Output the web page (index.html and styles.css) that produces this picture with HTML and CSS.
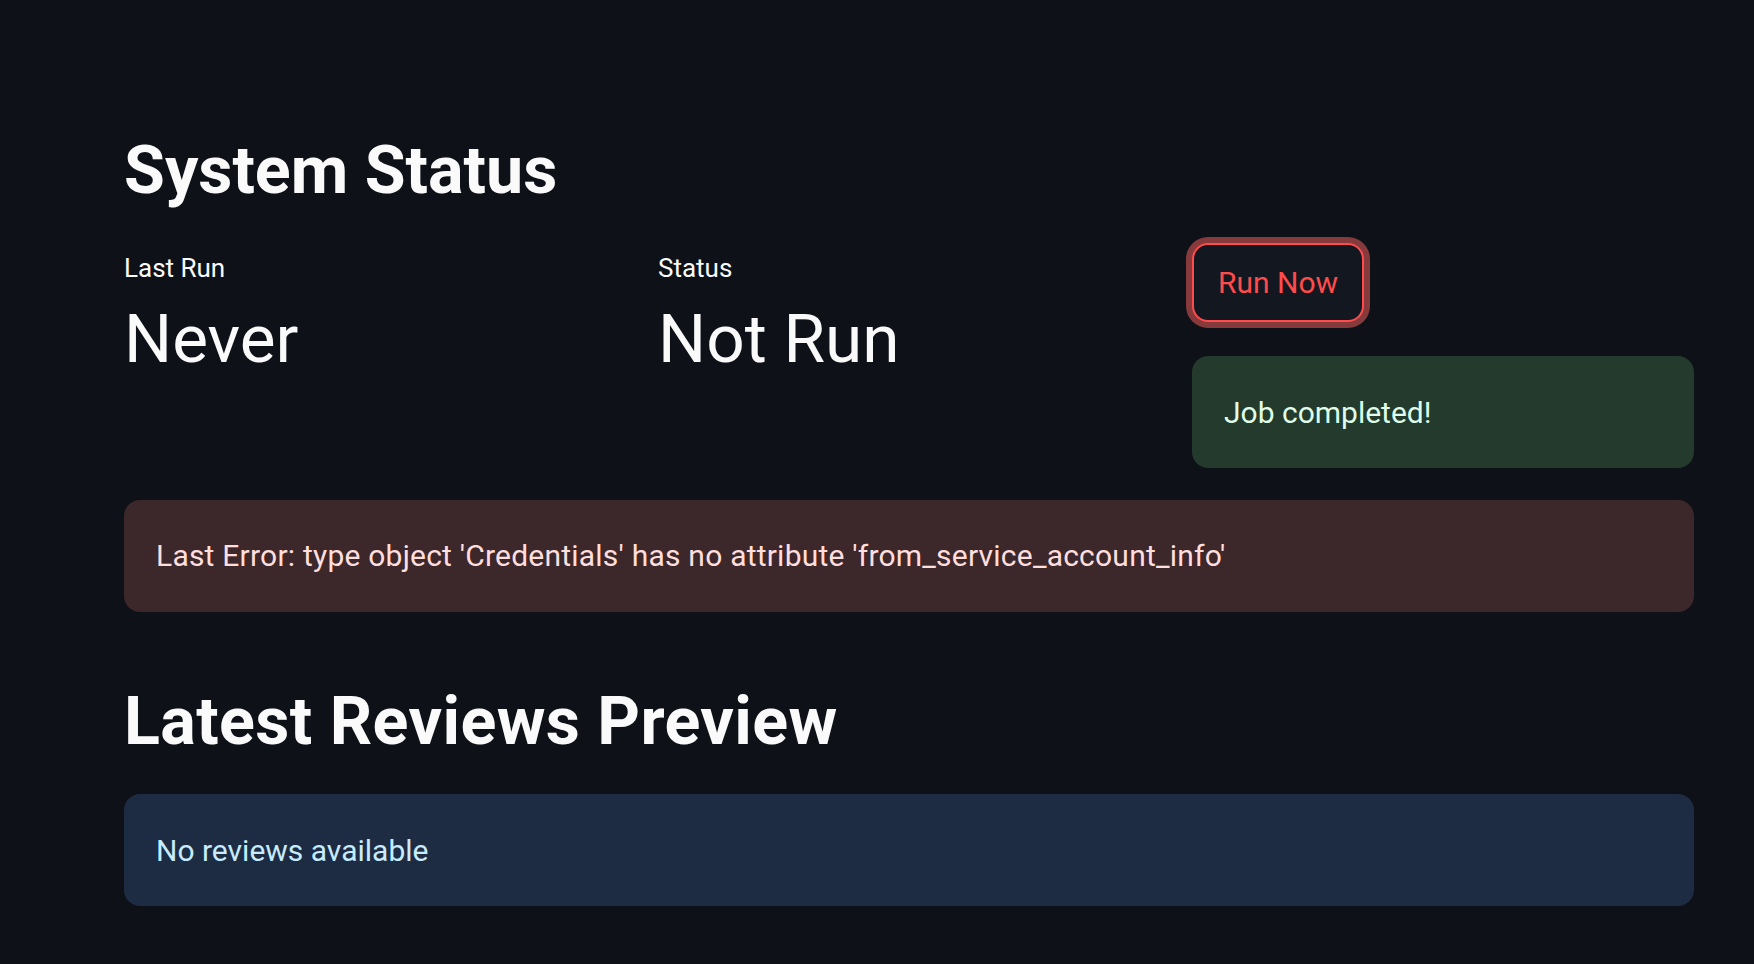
FILE: index.html
```html
<!DOCTYPE html>
<html lang="en">
<head>
<meta charset="utf-8">
<title>System Status</title>
<link rel="stylesheet" href="styles.css">
</head>
<body>
<main class="page">
  <h2 class="heading">System Status</h2>
  <div class="cols">
    <div class="metric">
      <div class="metric-label">Last Run</div>
      <div class="metric-value">Never</div>
    </div>
    <div class="metric">
      <div class="metric-label">Status</div>
      <div class="metric-value">Not Run</div>
    </div>
    <div class="actions">
      <button class="btn" type="button">Run Now</button>
      <div class="alert alert-success">Job completed!</div>
    </div>
  </div>
  <div class="alert alert-error">Last Error: type object 'Credentials' has no attribute 'from_service_account_info'</div>
  <h2 class="heading heading-second">Latest Reviews Preview</h2>
  <div class="alert alert-info">No reviews available</div>
</main>
</body>
</html>
```
FILE: styles.css
```css
html, body {
  margin: 0;
  padding: 0;
  background: #0e1117;
  overflow: hidden;
}
body {
  font-family: Roboto, "Liberation Sans", sans-serif;
  color: #fafafa;
}
.page {
  width: 1570px;
  padding: 130px 60px 0 124px;
}
.heading {
  margin: 0;
  font-weight: 700;
  font-size: 66.4px;
  line-height: 80px;
  color: #fafafa;
}
.cols {
  display: grid;
  grid-template-columns: repeat(3, 1fr);
  column-gap: 32px;
  margin-top: 33px;
  align-items: start;
}
.metric {
  padding-top: 7px;
}
.metric-label {
  font-size: 26px;
  line-height: 36px;
  color: #fafafa;
}
.metric-value {
  margin-top: 12px;
  font-size: 67.5px;
  line-height: 81px;
  font-weight: 400;
  color: #fafafa;
}
.actions {
  display: flex;
  flex-direction: column;
  align-items: stretch;
  gap: 34px;
}
.btn {
  align-self: flex-start;
  box-sizing: border-box;
  height: 79px;
  padding: 0 24px;
  border: 2px solid #ff4b4b;
  border-radius: 16px;
  background: #13171f;
  color: #ff4b4b;
  font-family: Roboto, "Liberation Sans", sans-serif;
  font-size: 30px;
  font-weight: 400;
  box-shadow: 0 0 0 6px #873a3c;
}
.alert {
  border-radius: 16px;
  padding: 32px 32px 30px;
  font-size: 30px;
  line-height: 50px;
}
.alert-success {
  background: #233a2d;
  color: #dffde9;
}
.alert-error {
  margin-top: 32px;
  padding-top: 31px;
  padding-bottom: 31px;
  background: #3c282a;
  color: #ffdede;
  letter-spacing: 0.22px;
}
.heading-second {
  margin-top: 69px;
  letter-spacing: 0.4px;
}
.alert-info {
  margin-top: 33px;
  background: #1d2c42;
  color: #c7ebff;
}
```
